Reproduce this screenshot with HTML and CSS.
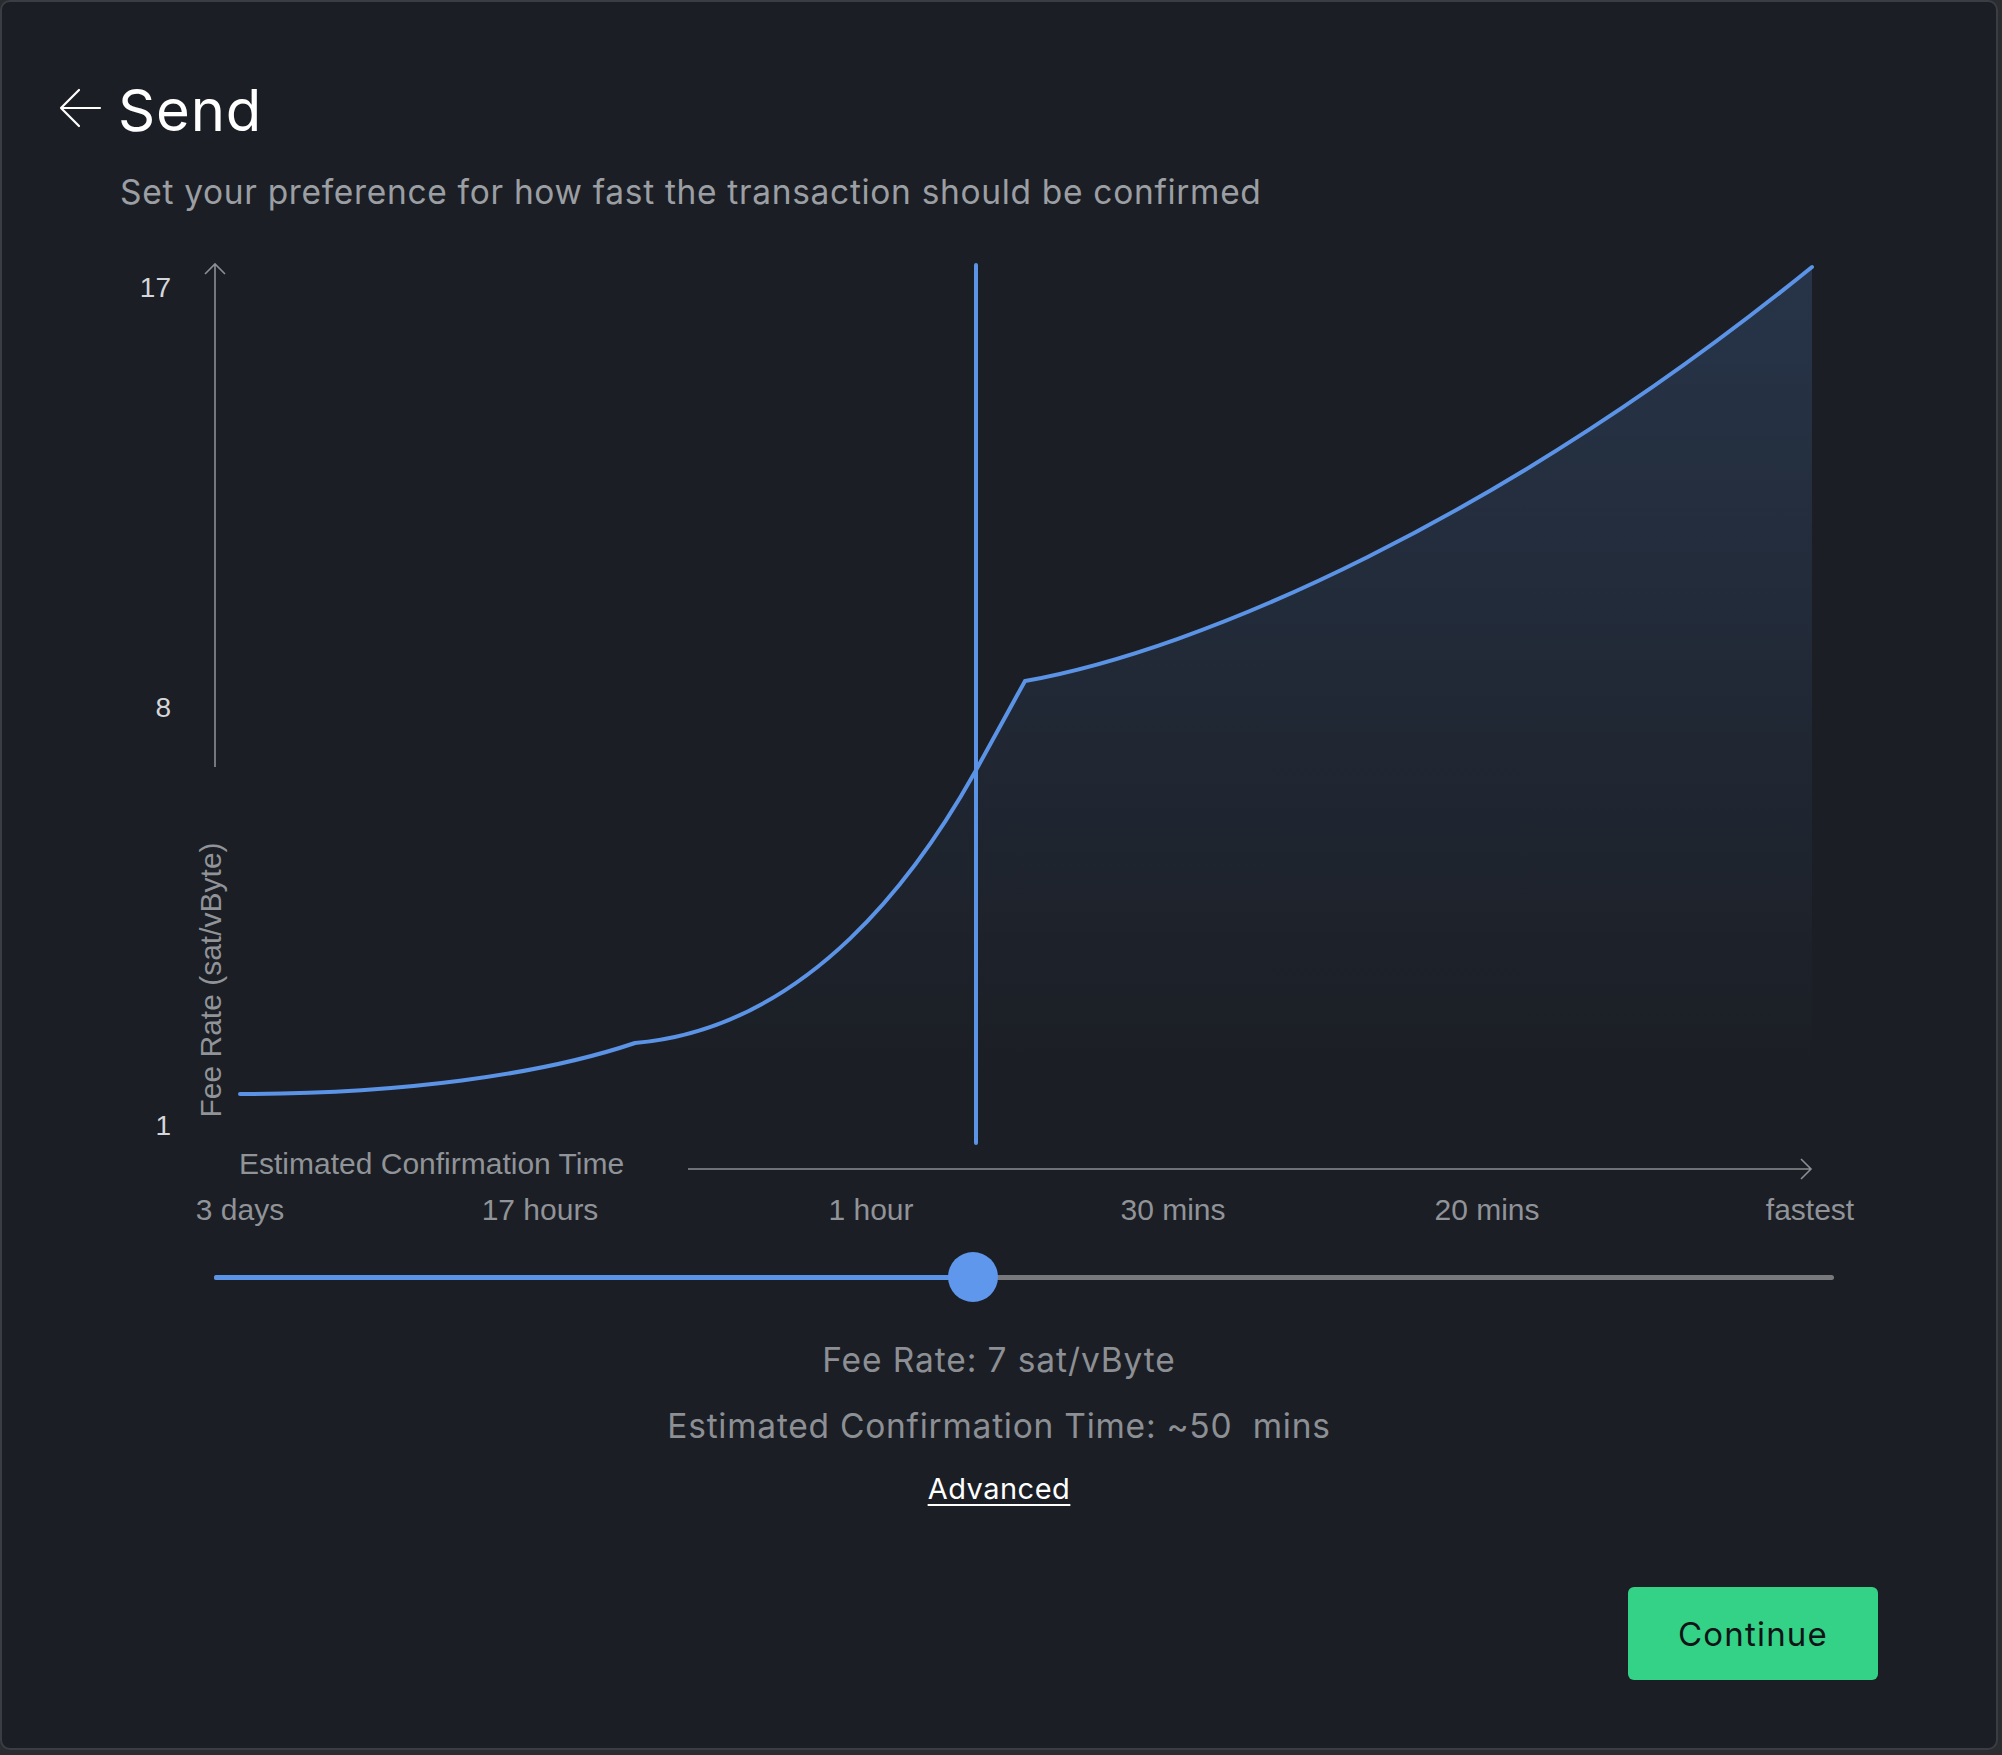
FILE: index.html
```html
<!DOCTYPE html>
<html lang="en">
<head>
<meta charset="utf-8">
<title>Send</title>
<link rel="stylesheet" href="styles.css">
</head>
<body>
<div class="modal">
  <header class="header">
    <svg class="back" width="44" height="40" viewBox="58 88 44 40">
      <path d="M100 108 H61 M79 90 L61 108 L79 126" fill="none" stroke="#ffffff" stroke-width="2.2" stroke-linecap="round" stroke-linejoin="round"/>
    </svg>
    <h1 class="title">Send</h1>
  </header>
  <p class="subtitle">Set your preference for how fast the transaction should be confirmed</p>

  <svg class="chart" width="1994" height="1000" viewBox="2 240 1994 1000">
    <defs>
      <linearGradient id="area" x1="0" y1="267" x2="0" y2="1078" gradientUnits="userSpaceOnUse">
        <stop offset="0" stop-color="#5b93e6" stop-opacity="0.19"/>
        <stop offset="1" stop-color="#5b93e6" stop-opacity="0"/>
      </linearGradient>
    </defs>
    <!-- y axis -->
    <path d="M215 767 V264 M205 274 L215 264 L225 274" fill="none" stroke="#8b8e93" stroke-width="1.6"/>
    <text class="ytick" x="171" y="297" text-anchor="end">17</text>
    <text class="ytick" x="171" y="717" text-anchor="end">8</text>
    <text class="ytick" x="171" y="1135" text-anchor="end">1</text>
    <text class="axis-label" transform="translate(221 980) rotate(-90)" text-anchor="middle">Fee Rate (sat/vByte)</text>

    <!-- area + curve -->
    <path d="M240 1094 C400 1094 540 1075 635 1043 C810 1028 920 870 975 772 L1025 681 C1200 650 1500 520 1812 267 L1812 1078 L240 1078 Z" fill="url(#area)"/>
    <path d="M240 1094 C400 1094 540 1075 635 1043 C810 1028 920 870 975 772 L1025 681 C1200 650 1500 520 1812 267" fill="none" stroke="#5b93e6" stroke-width="4" stroke-linecap="round" stroke-linejoin="miter"/>
    <line x1="976" y1="265" x2="976" y2="1143" stroke="#5b93e6" stroke-width="4" stroke-linecap="round"/>

    <!-- x axis -->
    <text class="axis-label" x="239" y="1174">Estimated Confirmation Time</text>
    <path d="M688 1169 H1811 M1801 1159 L1811 1169 L1801 1179" fill="none" stroke="#8b8e93" stroke-width="1.6"/>
    <text class="xtick" x="240" y="1220" text-anchor="middle">3 days</text>
    <text class="xtick" x="540" y="1220" text-anchor="middle">17 hours</text>
    <text class="xtick" x="871" y="1220" text-anchor="middle">1 hour</text>
    <text class="xtick" x="1173" y="1220" text-anchor="middle">30 mins</text>
    <text class="xtick" x="1487" y="1220" text-anchor="middle">20 mins</text>
    <text class="xtick" x="1810" y="1220" text-anchor="middle">fastest</text>
  </svg>

  <div class="slider-row">
    <div class="track">
      <div class="fill" style="width: 46.85%"></div>
      <div class="thumb" style="left: 46.85%"></div>
    </div>
  </div>

  <div class="info">
    <p class="info-line">Fee Rate: 7 sat/vByte</p>
    <p class="info-line second">Estimated Confirmation Time: ~50&nbsp; mins</p>
    <a class="advanced" href="#">Advanced</a>
  </div>

  <div class="footer">
    <button class="continue" type="button">Continue</button>
  </div>
</div>
</body>
</html>
```

FILE: styles.css
```css
html, body {
  margin: 0;
  padding: 0;
}

body {
  background: #2a2c30;
  width: 2002px;
  height: 1755px;
  overflow: hidden;
  font-family: "Inter", "Noto Sans", sans-serif;
}

.modal {
  box-sizing: border-box;
  width: 1998px;
  height: 1750px;
  background: #1b1e24;
  border: 2px solid #3a3d43;
  border-radius: 10px;
  padding-top: 73px;
  display: flex;
  flex-direction: column;
}

.header {
  display: flex;
  align-items: center;
  padding-left: 56px;
  height: 70px;
  gap: 16px;
}

.back {
  display: block;
  margin-top: -4px;
}

.title {
  margin: 0;
  font-size: 58px;
  line-height: 70px;
  font-weight: 400;
  color: #ffffff;
  letter-spacing: 0.8px;
}

.subtitle {
  margin: 27px 0 0 118px;
  font-size: 33.5px;
  line-height: 40px;
  color: #9b9ea3;
  letter-spacing: 0.68px;
}

.chart {
  display: block;
  margin-top: 28px;
  flex: none;
}

.ytick {
  font-family: "Liberation Sans", Arial, sans-serif;
  font-size: 28px;
  fill: #d4d6d9;
}

.axis-label,
.xtick {
  font-family: "Liberation Sans", Arial, sans-serif;
  font-size: 30px;
  fill: #909398;
}

.slider-row {
  margin-top: 12px;
  height: 50px;
  padding-left: 212px;
  display: flex;
  align-items: center;
}

.track {
  position: relative;
  width: 1620px;
  height: 5px;
  border-radius: 3px;
  background: #77797d;
}

.fill {
  height: 100%;
  border-radius: 3px;
  background: #5b93e6;
}

.thumb {
  position: absolute;
  top: 50%;
  width: 50px;
  height: 50px;
  border-radius: 50%;
  background: #5e97ec;
  transform: translate(-50%, -50%);
}

.info {
  display: flex;
  flex-direction: column;
  align-items: center;
  margin-top: 38px;
}

.info-line {
  margin: 0;
  font-size: 33.5px;
  line-height: 40px;
  color: #8c8f94;
  letter-spacing: 0.9px;
}

.info-line.second {
  margin-top: 26px;
  letter-spacing: 0.75px;
}

.advanced {
  margin-top: 25px;
  font-size: 29px;
  line-height: 36px;
  color: #ffffff;
  letter-spacing: 0.5px;
  text-decoration: underline;
  text-decoration-thickness: 2px;
  text-underline-offset: 5px;
}

.footer {
  margin-top: 80px;
  display: flex;
  justify-content: flex-end;
  padding-right: 118px;
}

.continue {
  width: 250px;
  height: 93px;
  border: none;
  border-radius: 6px;
  background: #33d286;
  color: #111316;
  font-family: "Inter", "Noto Sans", sans-serif;
  font-size: 33px;
  letter-spacing: 1.2px;
  padding: 0;
  cursor: pointer;
}
```
